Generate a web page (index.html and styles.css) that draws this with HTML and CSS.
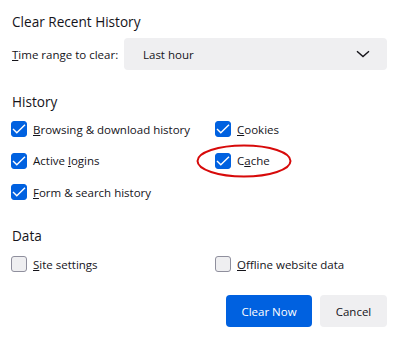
FILE: index.html
```html
<!DOCTYPE html>
<html lang="en">
<head>
<meta charset="utf-8">
<title>Clear Recent History</title>
<link rel="stylesheet" href="styles.css">
</head>
<body>
<div class="dialog">
  <h1 class="title">Clear Recent History</h1>
  <div class="range-row">
    <span class="range-label"><u>T</u>ime range to clear:</span>
    <div class="select">
      <span class="select-value">Last hour</span>
      <svg class="chevron" width="14" height="8" viewBox="0 0 14 8"><path d="M1 1.2 L7 6.6 L13 1.2" fill="none" stroke="#15141a" stroke-width="1.4"/></svg>
    </div>
  </div>

  <h2 class="section">History</h2>
  <div class="grid">
    <label class="item"><span class="box checked"><svg width="16" height="16" viewBox="0 0 16 16"><path d="M2 8 L5.8 11.8 L14 3.8" fill="none" stroke="#fff" stroke-width="1.4"/></svg></span><span><u>B</u>rowsing &amp; download history</span></label>
    <label class="item"><span class="box checked"><svg width="16" height="16" viewBox="0 0 16 16"><path d="M2 8 L5.8 11.8 L14 3.8" fill="none" stroke="#fff" stroke-width="1.4"/></svg></span><span><u>C</u>ookies</span></label>
    <label class="item"><span class="box checked"><svg width="16" height="16" viewBox="0 0 16 16"><path d="M2 8 L5.8 11.8 L14 3.8" fill="none" stroke="#fff" stroke-width="1.4"/></svg></span><span>Active <u>l</u>ogins</span></label>
    <label class="item cache"><span class="box checked"><svg width="16" height="16" viewBox="0 0 16 16"><path d="M2 8 L5.8 11.8 L14 3.8" fill="none" stroke="#fff" stroke-width="1.4"/></svg></span><span>C<u>a</u>che</span>
      <svg class="ring" width="98" height="36" viewBox="0 0 98 36"><ellipse cx="49" cy="18" rx="46.5" ry="15.5" fill="none" stroke="#d70a0a" stroke-width="2"/></svg>
    </label>
    <label class="item"><span class="box checked"><svg width="16" height="16" viewBox="0 0 16 16"><path d="M2 8 L5.8 11.8 L14 3.8" fill="none" stroke="#fff" stroke-width="1.4"/></svg></span><span><u>F</u>orm &amp; search history</span></label>
  </div>

  <h2 class="section data">Data</h2>
  <div class="grid data-grid">
    <label class="item"><span class="box"></span><span><u>S</u>ite settings</span></label>
    <label class="item"><span class="box"></span><span><u>O</u>ffline website data</span></label>
  </div>

  <div class="buttons">
    <button class="btn primary">Clear Now</button>
    <button class="btn">Cancel</button>
  </div>
</div>
</body>
</html>
```

FILE: styles.css
```css
html, body {
  margin: 0;
  padding: 0;
  background: #ffffff;
}

body {
  font-family: "Open Sans", "Noto Sans", sans-serif;
  color: #15141a;
}

.dialog {
  position: relative;
  width: 394px;
  height: 340px;
  box-sizing: border-box;
  padding: 12px 7px 0 11px;
}

.title {
  margin: 0;
  font-size: 13.6px;
  line-height: 20px;
  font-weight: 400;
  padding-left: 1px;
}

.range-row {
  display: flex;
  align-items: center;
  margin-top: 6px;
}

.range-label {
  font-size: 11.5px;
  width: 112px;
  padding-left: 1px;
  white-space: nowrap;
}

.select {
  flex: 1;
  height: 32px;
  background: #efeff1;
  border-radius: 4px;
  display: flex;
  align-items: center;
  justify-content: space-between;
  padding: 0 17px 0 19px;
  box-sizing: border-box;
  font-size: 11.5px;
}

.section {
  margin: 22px 0 0;
  font-size: 13.6px;
  line-height: 20px;
  font-weight: 400;
  padding-left: 1px;
}

.section.data {
  margin-top: 26px;
}

.grid {
  display: grid;
  grid-template-columns: 204px 1fr;
  row-gap: 15.5px;
  margin-top: 9px;
}

.grid.data-grid {
  margin-top: 10px;
}

.item {
  display: flex;
  align-items: center;
  gap: 6px;
  height: 16px;
  font-size: 11.5px;
  position: relative;
  white-space: nowrap;
}

.box {
  width: 16px;
  height: 16px;
  box-sizing: border-box;
  border-radius: 3px;
  border: 1px solid #8f8f9d;
  background: #efeff1;
  flex: none;
  display: flex;
}

.box.checked {
  background: #0061e0;
  border-color: #0061e0;
}

.box.checked svg {
  margin: -1px;
}

.ring {
  position: absolute;
  left: -20px;
  top: -10px;
}

.buttons {
  display: flex;
  justify-content: flex-end;
  gap: 8px;
  margin-top: 23px;
}

.btn {
  height: 32px;
  border: none;
  border-radius: 4px;
  background: #efeff1;
  color: #15141a;
  font-family: inherit;
  font-size: 11.5px;
  padding: 0;
  width: 67px;
  white-space: nowrap;
}

.btn.primary {
  background: #0061e0;
  color: #ffffff;
  width: 86px;
}
```
